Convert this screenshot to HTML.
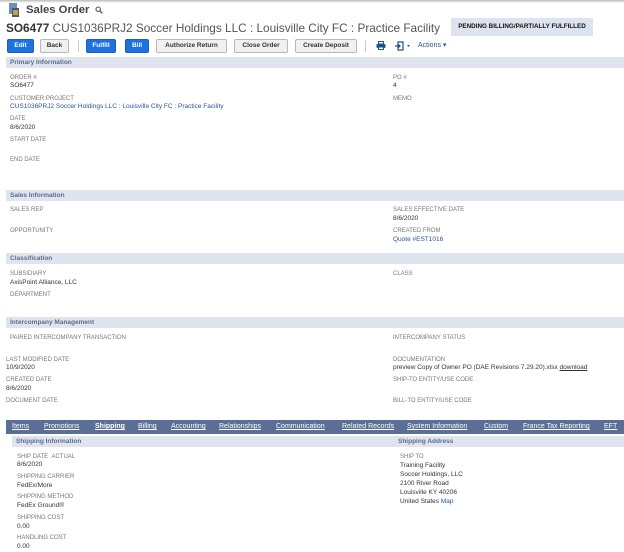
<!DOCTYPE html>
<html><head><meta charset="utf-8"><style>
*{margin:0;padding:0;box-sizing:border-box}
body{width:624px;height:552px;background:#fff;position:relative;overflow:hidden;font-family:"Liberation Sans",sans-serif;color:#333}
.a{position:absolute;white-space:nowrap;line-height:8px}
.l{font-size:6px;color:#777}
.v{font-size:6.5px;color:#333}
.k{color:#2a5599}
.bar{position:absolute;left:6px;right:0;height:11px;background:#dfe4ee;font-size:6.5px;font-weight:bold;color:#5a6e8c;padding-left:4px;line-height:11px}
.btn{position:absolute;top:39px;height:14px;border-radius:2px;font-size:6.5px;font-weight:bold;text-align:center;line-height:12px}
.g{background:#f1f1f1;border:1px solid #b8b8b8;color:#333}
.b{background:#1d73dd;border:1px solid #1860bb;color:#fff}
.tab{position:absolute;top:420px;line-height:14px;font-size:7px;color:#fff;text-decoration:underline;text-decoration-thickness:0.5px}
</style></head><body>
<div style="position:absolute;left:0;top:0;width:624px;height:3px;background:linear-gradient(#bbb,#fff)"></div>
<svg class="a" style="left:8px;top:3px" width="12" height="14" viewBox="0 0 12 14"><rect x="1" y="0" width="8" height="11" fill="#6d8fbe"/><rect x="4" y="5" width="7" height="9" fill="#4a5a6a"/><rect x="5" y="7" width="5" height="5" fill="#c9a04a"/></svg>
<div class="a" style="left:26px;top:4px;font-size:11.3px;line-height:13px;font-weight:bold;color:#444">Sales Order</div>
<svg class="a" style="left:95px;top:6px" width="8" height="8" viewBox="0 0 8 8"><circle cx="3.2" cy="3.2" r="2.2" fill="none" stroke="#555" stroke-width="1.1"/><path d="M5 5L7.3 7.3" stroke="#555" stroke-width="1.3"/></svg>
<div class="a" style="left:6px;top:20px;font-size:11.8px;line-height:16px;color:#555"><b style="color:#333">SO6477</b> CUS1036PRJ2 Soccer Holdings LLC : Louisville City FC : Practice Facility</div>
<div class="a" style="left:451px;top:18px;width:142px;height:18px;background:#dde4ef;font-size:6.3px;font-weight:bold;color:#111;line-height:18px;text-align:center">PENDING BILLING/PARTIALLY FULFILLED</div>
<div class="btn b" style="left:7px;width:27px">Edit</div>
<div class="btn g" style="left:40px;width:29px">Back</div>
<div style="position:absolute;left:78px;top:40px;width:1px;height:12px;background:#ccc"></div>
<div class="btn b" style="left:86px;width:30px">Fulfill</div>
<div class="btn b" style="left:125px;width:24px">Bill</div>
<div class="btn g" style="left:156px;width:71px">Authorize Return</div>
<div class="btn g" style="left:234px;width:54px">Close Order</div>
<div class="btn g" style="left:295px;width:62px">Create Deposit</div>
<div style="position:absolute;left:365px;top:40px;width:1px;height:12px;background:#ccc"></div>
<svg class="a" style="left:376px;top:41px" width="10" height="9" viewBox="0 0 10 9"><rect x="2.5" y="0.5" width="5" height="2.5" fill="none" stroke="#234f93"/><rect x="0.5" y="3" width="9" height="4" rx="1" fill="#234f93"/><rect x="2.5" y="6" width="5" height="2.5" fill="#fff" stroke="#234f93"/></svg>
<svg class="a" style="left:395px;top:41px" width="16" height="10" viewBox="0 0 16 10"><path d="M3 1h5v8H3z" fill="none" stroke="#234f93" stroke-width="1.2"/><path d="M0 5h5M3 3l2 2-2 2" stroke="#234f93" stroke-width="1.2" fill="none"/><path d="M12 4h3l-1.5 2z" fill="#234f93"/></svg>
<div class="a" style="left:418px;top:42px;font-size:7px;color:#2a5599">Actions ▾</div>

<div class="bar" style="top:57px">Primary Information</div>
<div class="a l" style="left:10px;top:74px">ORDER #</div>
<div class="a v" style="left:10px;top:82px">SO6477</div>
<div class="a l" style="left:10px;top:95px">CUSTOMER:PROJECT</div>
<div class="a v k" style="left:10px;top:103px">CUS1036PRJ2 Soccer Holdings LLC : Louisville City FC : Practice Facility</div>
<div class="a l" style="left:10px;top:115px">DATE</div>
<div class="a v" style="left:10px;top:124px">8/6/2020</div>
<div class="a l" style="left:10px;top:136px">START DATE</div>
<div class="a l" style="left:10px;top:156px">END DATE</div>
<div class="a l" style="left:393px;top:74px">PO #</div>
<div class="a v" style="left:393px;top:82px">4</div>
<div class="a l" style="left:393px;top:95px">MEMO</div>

<div class="bar" style="top:190px">Sales Information</div>
<div class="a l" style="left:10px;top:206px">SALES REP</div>
<div class="a l" style="left:10px;top:227px">OPPORTUNITY</div>
<div class="a l" style="left:393px;top:206px">SALES EFFECTIVE DATE</div>
<div class="a v" style="left:393px;top:215px">8/6/2020</div>
<div class="a l" style="left:393px;top:227px">CREATED FROM</div>
<div class="a v k" style="left:393px;top:236px">Quote #EST1016</div>

<div class="bar" style="top:253px">Classification</div>
<div class="a l" style="left:10px;top:270px">SUBSIDIARY</div>
<div class="a v" style="left:10px;top:279px">AxisPoint Alliance, LLC</div>
<div class="a l" style="left:10px;top:291px">DEPARTMENT</div>
<div class="a l" style="left:393px;top:270px">CLASS</div>

<div class="bar" style="top:317px">Intercompany Management</div>
<div class="a l" style="left:10px;top:334px">PAIRED INTERCOMPANY TRANSACTION</div>
<div class="a l" style="left:393px;top:334px">INTERCOMPANY STATUS</div>
<div class="a l" style="left:6px;top:356px">LAST MODIFIED DATE</div>
<div class="a v" style="left:6px;top:364px">10/9/2020</div>
<div class="a l" style="left:6px;top:376px">CREATED DATE</div>
<div class="a v" style="left:6px;top:385px">8/6/2020</div>
<div class="a l" style="left:6px;top:397px">DOCUMENT DATE</div>
<div class="a l" style="left:393px;top:356px">DOCUMENTATION</div>
<div class="a v" style="left:393px;top:364px">preview Copy of Owner PO (DAE Revisions 7.29.20).xlsx <u>download</u></div>
<div class="a l" style="left:393px;top:376px">SHIP-TO ENTITY/USE CODE</div>
<div class="a l" style="left:393px;top:397px">BILL-TO ENTITY/USE CODE</div>

<div style="position:absolute;left:6px;right:0;top:420px;height:14px;background:#5b6f96"></div>
<div class="tab" style="left:12px">Items</div>
<div class="tab" style="left:44px">Promotions</div>
<div class="tab" style="left:95px;font-weight:bold">Shipping</div>
<div style="position:absolute;left:107px;top:431px;width:0;height:0;border:3px solid transparent;border-bottom-color:#fff"></div>
<div class="tab" style="left:138px">Billing</div>
<div class="tab" style="left:171px">Accounting</div>
<div class="tab" style="left:219px">Relationships</div>
<div class="tab" style="left:276px">Communication</div>
<div class="tab" style="left:342px">Related Records</div>
<div class="tab" style="left:407px">System Information</div>
<div class="tab" style="left:484px">Custom</div>
<div class="tab" style="left:523px">France Tax Reporting</div>
<div class="tab" style="left:604px">EFT</div>

<div class="bar" style="top:436px;left:12px">Shipping Information<span style="position:absolute;left:386px">Shipping Address</span></div>
<div class="a l" style="left:17px;top:453px">SHIP DATE &nbsp;ACTUAL</div>
<div class="a v" style="left:17px;top:461px">8/6/2020</div>
<div class="a l" style="left:17px;top:473px">SHIPPING CARRIER</div>
<div class="a v" style="left:17px;top:482px">FedEx/More</div>
<div class="a l" style="left:17px;top:493px">SHIPPING METHOD</div>
<div class="a v" style="left:17px;top:502px">FedEx Ground®</div>
<div class="a l" style="left:17px;top:514px">SHIPPING COST</div>
<div class="a v" style="left:17px;top:523px">0.00</div>
<div class="a l" style="left:17px;top:534px">HANDLING COST</div>
<div class="a v" style="left:17px;top:543px">0.00</div>
<div class="a l" style="left:400px;top:453px">SHIP TO</div>
<div class="a v" style="left:400px;top:461px;line-height:9px">Training Facility<br>Soccer Holdings, LLC<br>2100 River Road<br>Louisville KY 40206<br>United States <span class="k">Map</span></div>
</body></html>
